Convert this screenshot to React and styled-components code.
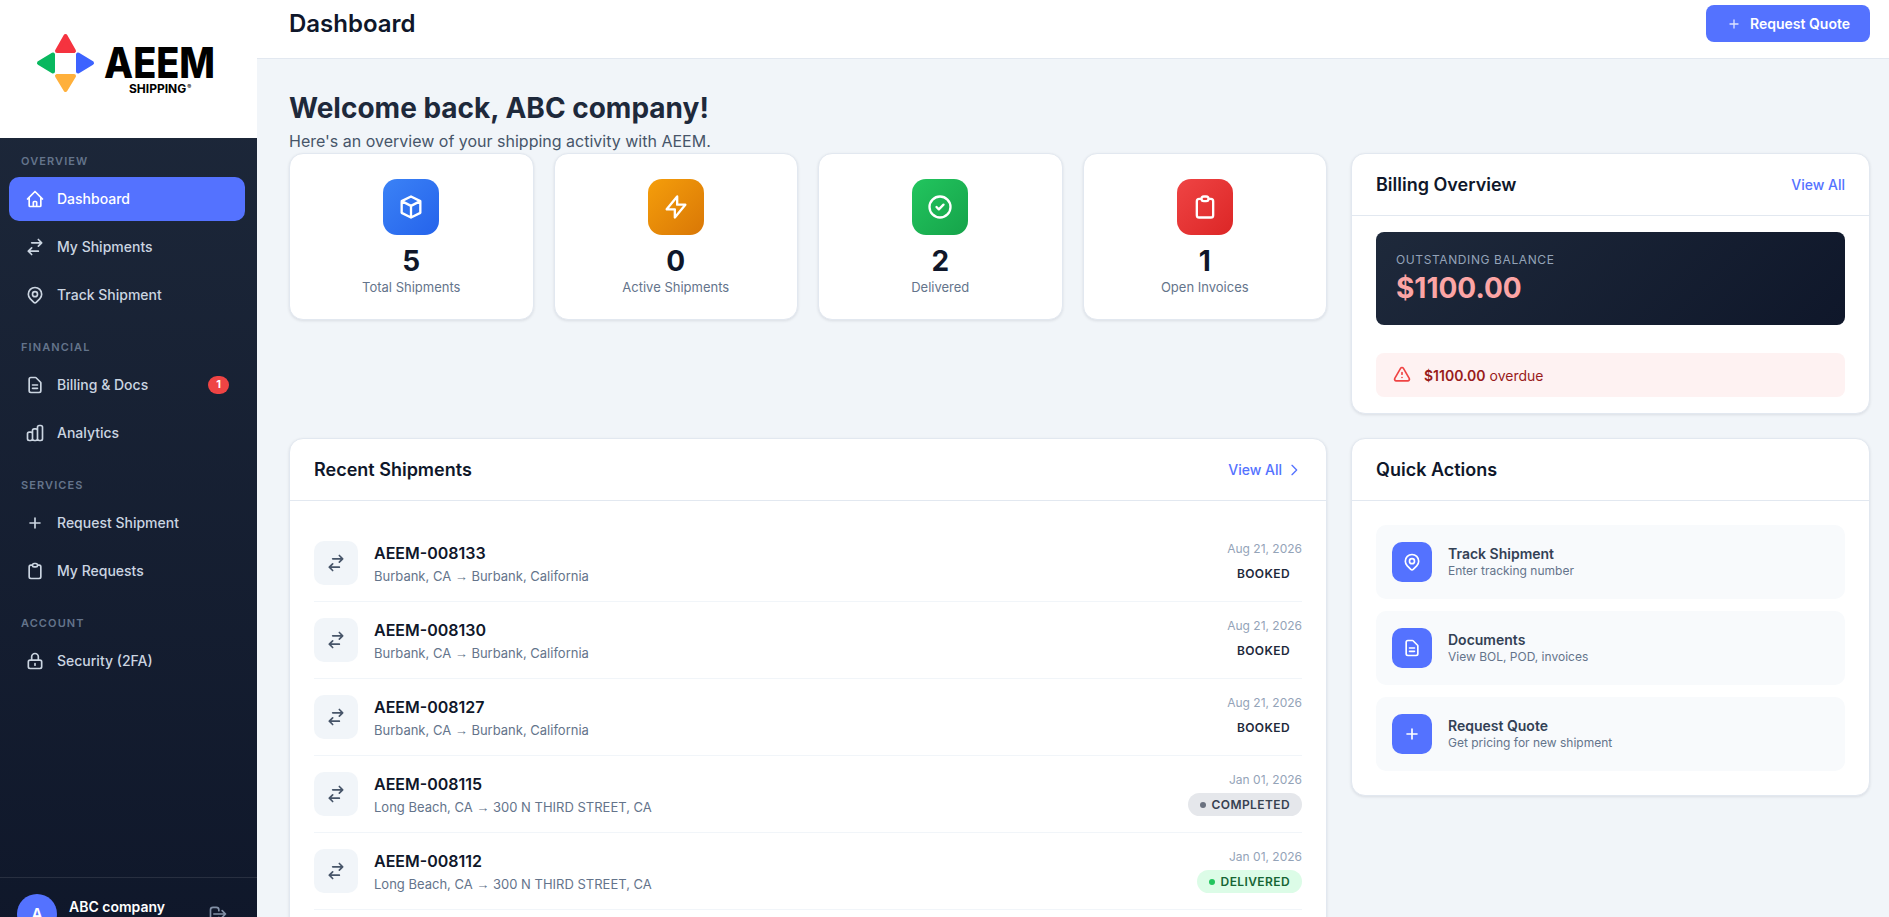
import styled, { createGlobalStyle } from "styled-components"
import {
    HiOutlineHome,
    HiOutlineSwitchHorizontal,
    HiOutlineLocationMarker,
    HiOutlineDocumentText,
    HiOutlineChartBar,
    HiOutlineClipboard,
    HiOutlineLockClosed,
    HiOutlineLogout,
    HiOutlineCube,
    HiOutlineLightningBolt,
    HiOutlineCheckCircle,
    HiOutlineExclamation,
    HiOutlineChevronRight,
} from "react-icons/hi"

const accent = "#5472ff"

const GlobalStyle = createGlobalStyle`
    * { box-sizing: border-box; }
    html, body {
        margin: 0;
        height: 100%;
        overflow: hidden;
        background: #f1f5f9;
        font-family: Inter, "Liberation Sans", sans-serif;
        font-size: 14px;
        line-height: 1.5;
    }
`

const Shell = styled.div`
    display: flex;
    width: 1889px;
    min-height: 950px;
`

const Sidebar = styled.aside`
    width: 257px;
    flex-shrink: 0;
    display: flex;
    flex-direction: column;
    background: linear-gradient(180deg, #1e293b 0%, #0f172a 100%);
`

const LogoBox = styled.div`
    height: 138px;
    background: #fff;
    display: flex;
    align-items: flex-start;
    svg { display: block; }
`

const Nav = styled.nav`
    flex: 1;
    padding: 15px 12px 0 9px;
    display: flex;
    flex-direction: column;
    gap: 22.5px;
`

const Section = styled.div`
    display: flex;
    flex-direction: column;
    gap: 4px;
`

const SectionLabel = styled.div`
    padding-left: 12px;
    margin-bottom: 3px;
    font-size: 11px;
    line-height: 16.5px;
    font-weight: 600;
    letter-spacing: 1.1px;
    text-transform: uppercase;
    color: #64748b;
`

const NavItem = styled.a`
    height: 44px;
    display: flex;
    align-items: center;
    gap: 12px;
    padding: 0 16px;
    border-radius: 10px;
    font-size: 14px;
    font-weight: 500;
    color: ${({ $active }) => ($active ? "#fff" : "#cbd5e1")};
    background: ${({ $active }) => ($active ? accent : "transparent")};
    svg { font-size: 20px; flex-shrink: 0; }
`

const NavBadge = styled.span`
    margin-left: auto;
    width: 21px;
    height: 18px;
    border-radius: 9px;
    background: #ef4444;
    color: #fff;
    font-size: 11px;
    font-weight: 700;
    display: flex;
    align-items: center;
    justify-content: center;
`

const SideFooter = styled.div`
    border-top: 1px solid rgba(255, 255, 255, 0.1);
    padding: 16px 29px 16px 17px;
    display: flex;
    align-items: center;
    gap: 12px;
`

const Avatar = styled.div`
    width: 40px;
    height: 40px;
    border-radius: 50%;
    background: ${accent};
    color: #fff;
    font-size: 16px;
    font-weight: 600;
    display: flex;
    align-items: center;
    justify-content: center;
    flex-shrink: 0;
`

const UserName = styled.div`
    flex: 1;
    align-self: flex-start;
    padding-top: 2px;
    color: #fff;
    font-size: 14px;
    font-weight: 600;
`

const LogoutIcon = styled(HiOutlineLogout)`
    font-size: 20px;
    color: #8391a7;
`

const Content = styled.div`
    flex: 1;
    min-width: 0;
    display: flex;
    flex-direction: column;
`

const Topbar = styled.header`
    height: 59px;
    background: #fff;
    border-bottom: 1px solid #e2e8f0;
    padding: 0 19px 11px 32px;
    display: flex;
    align-items: center;
    justify-content: space-between;
`

const PageTitle = styled.h1`
    margin: 0;
    font-size: 24px;
    line-height: 1.3;
    font-weight: 600;
    color: #0f172a;
`

const QuoteButton = styled.button`
    height: 37px;
    padding: 0 20px;
    border: 0;
    border-radius: 8px;
    background: ${accent};
    color: #fff;
    font-family: inherit;
    font-size: 14px;
    font-weight: 600;
    display: flex;
    align-items: center;
    gap: 8px;
    svg { width: 16px; height: 16px; opacity: 0.8; }
`

const Main = styled.main`
    padding: 32px 19px 0 32px;
`

const Welcome = styled.h2`
    margin: 0;
    font-size: 28px;
    line-height: 34px;
    font-weight: 700;
    color: #1e293b;
`

const Subtitle = styled.p`
    margin: 5px 0 0;
    font-size: 16px;
    line-height: 23px;
    color: #475569;
`

const Grid = styled.div`
    display: grid;
    grid-template-columns: 2fr 1fr;
    column-gap: 24px;
    row-gap: 24px;
    align-items: start;
`

const Stats = styled.div`
    display: grid;
    grid-template-columns: repeat(4, 1fr);
    gap: 20px;
`

const Card = styled.section`
    background: #fff;
    border: 1px solid #e2e8f0;
    border-radius: 14px;
    box-shadow: 0 1px 3px rgba(15, 23, 42, 0.1);
`

const StatCard = styled(Card)`
    padding: 25px 16px 21px;
    display: flex;
    flex-direction: column;
    align-items: center;
`

const StatIcon = styled.div`
    width: 56px;
    height: 56px;
    border-radius: 14px;
    color: #fff;
    background: linear-gradient(135deg, ${({ $from }) => $from}, ${({ $to }) => $to});
    display: flex;
    align-items: center;
    justify-content: center;
    svg { font-size: 28px; }
`

const StatValue = styled.div`
    margin-top: 9px;
    font-size: 28px;
    line-height: 34px;
    font-weight: 700;
    color: #0f172a;
`

const StatLabel = styled.div`
    font-size: 13px;
    line-height: 19.5px;
    color: #64748b;
`

const CardHeader = styled.div`
    height: 62px;
    padding: 0 24px;
    border-bottom: 1px solid #e2e8f0;
    display: flex;
    align-items: center;
    justify-content: space-between;
`

const CardTitle = styled.h3`
    margin: 0;
    font-size: 18px;
    font-weight: 600;
    color: #0f172a;
`

const ViewAll = styled.a`
    font-size: 14px;
    font-weight: 500;
    color: ${accent};
    display: flex;
    align-items: center;
    gap: 4px;
    svg { font-size: 16px; }
`

const BillingBody = styled.div`
    padding: 16px 24px;
    display: flex;
    flex-direction: column;
    gap: 28px;
`

const Balance = styled.div`
    height: 93px;
    padding: 19px 20px;
    border-radius: 8px;
    background: linear-gradient(135deg, #1e293b, #0f172a);
`

const BalanceLabel = styled.div`
    font-size: 12px;
    line-height: 18px;
    letter-spacing: 0.6px;
    color: #94a3b8;
`

const BalanceAmount = styled.div`
    margin-top: 2px;
    font-size: 28px;
    line-height: 34px;
    font-weight: 700;
    color: #fca5a5;
`

const Alert = styled.div`
    height: 44px;
    padding: 0 16px;
    border-radius: 8px;
    background: #fef2f2;
    color: #991b1b;
    display: flex;
    align-items: center;
    gap: 12px;
    font-size: 14px;
    strong { font-weight: 600; }
    svg { font-size: 20px; color: #ef4444; }
`

const ListBody = styled.div`
    padding: 24px;
`

const Row = styled.div`
    display: flex;
    align-items: center;
    gap: 16px;
    height: 77px;
    border-bottom: 1px solid #f1f5f9;
`

const RowIcon = styled.div`
    width: 44px;
    height: 44px;
    flex-shrink: 0;
    border-radius: 10px;
    background: #f1f5f9;
    color: #475569;
    display: flex;
    align-items: center;
    justify-content: center;
    svg { font-size: 20px; }
`

const RowText = styled.div`
    flex: 1;
    min-width: 0;
`

const RowTitle = styled.div`
    font-size: 16px;
    line-height: 24px;
    font-weight: 600;
    color: #0f172a;
`

const RowSub = styled.div`
    margin-top: 2px;
    font-size: 13px;
    line-height: 18px;
    color: #64748b;
`

const RouteArrow = styled.span`
    font-family: "Liberation Sans", sans-serif;
    font-size: 13px;
    line-height: 0;
`

const RowMeta = styled.div`
    display: flex;
    flex-direction: column;
    align-items: flex-end;
    gap: 6px;
`

const RowDate = styled.div`
    font-size: 12px;
    line-height: 15px;
    color: #94a3b8;
`

const Badge = styled.span`
    height: 23px;
    padding: 0 12px;
    border-radius: 12px;
    font-size: 12px;
    font-weight: 600;
    letter-spacing: 0.4px;
    display: flex;
    align-items: center;
    gap: 6px;
    color: ${({ $color }) => $color};
    background: ${({ $bg }) => $bg};
`

const Dot = styled.i`
    width: 6px;
    height: 6px;
    border-radius: 50%;
    background: ${({ $color }) => $color};
`

const Actions = styled.div`
    padding: 24px;
    display: flex;
    flex-direction: column;
    gap: 12px;
`

const Action = styled.a`
    height: 74px;
    padding: 0 16px;
    border-radius: 10px;
    background: #f8fafc;
    display: flex;
    align-items: center;
    gap: 16px;
`

const ActionIcon = styled.div`
    width: 40px;
    height: 40px;
    flex-shrink: 0;
    border-radius: 10px;
    background: ${accent};
    color: #fff;
    display: flex;
    align-items: center;
    justify-content: center;
    svg { width: 20px; height: 20px; }
`

const ActionTitle = styled.div`
    font-size: 14px;
    line-height: 18px;
    font-weight: 600;
    color: #334155;
`

const ActionSub = styled.div`
    font-size: 12px;
    line-height: 16px;
    color: #64748b;
`

const PlusIcon = () => (
    <svg width="1em" height="1em" viewBox="0 0 24 24" fill="none" stroke="currentColor" strokeWidth="2" strokeLinecap="round" strokeLinejoin="round">
        <path d="M12 6v6m0 0v6m0-6h6m-6 0H6" />
    </svg>
)

const Logo = () => (
    <svg width="230" height="120" viewBox="0 0 230 120">
        <g strokeWidth="4" strokeLinejoin="round">
            <path d="M65.5 36 74 51 57 51Z" fill="#f5333f" stroke="#f5333f" />
            <path d="M39 63 53 54.5 53 71.5Z" fill="#09b85f" stroke="#09b85f" />
            <path d="M92 63 78 54.5 78 71.5Z" fill="#3d63ff" stroke="#3d63ff" />
            <path d="M65.5 90 57 76 74 76Z" fill="#ffb03b" stroke="#ffb03b" />
        </g>
        <text
            x="104"
            y="77.5"
            textLength="111"
            lengthAdjust="spacingAndGlyphs"
            fontFamily="Inter, sans-serif"
            fontSize="42"
            fontWeight="800"
            fill="#000"
        >
            AEEM
        </text>
        <text x="129" y="92.5" fontFamily="Inter, sans-serif" fontSize="12" fontWeight="700" fill="#000">
            SHIPPING
            <tspan fontSize="6" dx="1" dy="-4">®</tspan>
        </text>
    </svg>
)

const stats = [
    { value: "5", label: "Total Shipments", icon: <HiOutlineCube />, from: "#3b82f6", to: "#2563eb" },
    { value: "0", label: "Active Shipments", icon: <HiOutlineLightningBolt />, from: "#f59e0b", to: "#d97706" },
    { value: "2", label: "Delivered", icon: <HiOutlineCheckCircle />, from: "#22c55e", to: "#16a34a" },
    { value: "1", label: "Open Invoices", icon: <HiOutlineClipboard />, from: "#ef4444", to: "#dc2626" },
]

const booked = { label: "BOOKED", color: "#1e293b", bg: "transparent" }
const completed = { label: "COMPLETED", color: "#374151", bg: "#e5e7eb", dot: "#6b7280" }
const delivered = { label: "DELIVERED", color: "#166534", bg: "#dcfce7", dot: "#22c55e" }

const shipments = [
    { id: "AEEM-008133", from: "Burbank, CA", to: "Burbank, California", date: "Aug 21, 2026", status: booked },
    { id: "AEEM-008130", from: "Burbank, CA", to: "Burbank, California", date: "Aug 21, 2026", status: booked },
    { id: "AEEM-008127", from: "Burbank, CA", to: "Burbank, California", date: "Aug 21, 2026", status: booked },
    { id: "AEEM-008115", from: "Long Beach, CA", to: "300 N THIRD STREET, CA", date: "Jan 01, 2026", status: completed },
    { id: "AEEM-008112", from: "Long Beach, CA", to: "300 N THIRD STREET, CA", date: "Jan 01, 2026", status: delivered },
]

const App = () => {
    return (
        <Shell>
            <GlobalStyle />
            <Sidebar>
                <LogoBox>
                    <Logo />
                </LogoBox>
                <Nav>
                    <Section>
                        <SectionLabel>Overview</SectionLabel>
                        <NavItem $active><HiOutlineHome />Dashboard</NavItem>
                        <NavItem><HiOutlineSwitchHorizontal />My Shipments</NavItem>
                        <NavItem><HiOutlineLocationMarker />Track Shipment</NavItem>
                    </Section>
                    <Section>
                        <SectionLabel>Financial</SectionLabel>
                        <NavItem>
                            <HiOutlineDocumentText />Billing &amp; Docs
                            <NavBadge>1</NavBadge>
                        </NavItem>
                        <NavItem><HiOutlineChartBar />Analytics</NavItem>
                    </Section>
                    <Section>
                        <SectionLabel>Services</SectionLabel>
                        <NavItem><PlusIcon />Request Shipment</NavItem>
                        <NavItem><HiOutlineClipboard />My Requests</NavItem>
                    </Section>
                    <Section>
                        <SectionLabel>Account</SectionLabel>
                        <NavItem><HiOutlineLockClosed />Security (2FA)</NavItem>
                    </Section>
                </Nav>
                <SideFooter>
                    <Avatar>A</Avatar>
                    <UserName>ABC company</UserName>
                    <LogoutIcon />
                </SideFooter>
            </Sidebar>
            <Content>
                <Topbar>
                    <PageTitle>Dashboard</PageTitle>
                    <QuoteButton><PlusIcon />Request Quote</QuoteButton>
                </Topbar>
                <Main>
                    <Welcome>Welcome back, ABC company!</Welcome>
                    <Subtitle>Here's an overview of your shipping activity with AEEM.</Subtitle>
                    <Grid>
                        <Stats>
                            {stats.map((s) => (
                                <StatCard key={s.label}>
                                    <StatIcon $from={s.from} $to={s.to}>{s.icon}</StatIcon>
                                    <StatValue>{s.value}</StatValue>
                                    <StatLabel>{s.label}</StatLabel>
                                </StatCard>
                            ))}
                        </Stats>
                        <Card>
                            <CardHeader>
                                <CardTitle>Billing Overview</CardTitle>
                                <ViewAll>View All</ViewAll>
                            </CardHeader>
                            <BillingBody>
                                <Balance>
                                    <BalanceLabel>OUTSTANDING BALANCE</BalanceLabel>
                                    <BalanceAmount>$1100.00</BalanceAmount>
                                </Balance>
                                <Alert>
                                    <HiOutlineExclamation />
                                    <span><strong>$1100.00</strong> overdue</span>
                                </Alert>
                            </BillingBody>
                        </Card>
                        <Card>
                            <CardHeader>
                                <CardTitle>Recent Shipments</CardTitle>
                                <ViewAll>View All <HiOutlineChevronRight /></ViewAll>
                            </CardHeader>
                            <ListBody>
                                {shipments.map((s) => (
                                    <Row key={s.id}>
                                        <RowIcon><HiOutlineSwitchHorizontal /></RowIcon>
                                        <RowText>
                                            <RowTitle>{s.id}</RowTitle>
                                            <RowSub>{s.from} <RouteArrow>→</RouteArrow> {s.to}</RowSub>
                                        </RowText>
                                        <RowMeta>
                                            <RowDate>{s.date}</RowDate>
                                            <Badge $color={s.status.color} $bg={s.status.bg}>
                                                {s.status.dot && <Dot $color={s.status.dot} />}
                                                {s.status.label}
                                            </Badge>
                                        </RowMeta>
                                    </Row>
                                ))}
                            </ListBody>
                        </Card>
                        <Card>
                            <CardHeader>
                                <CardTitle>Quick Actions</CardTitle>
                            </CardHeader>
                            <Actions>
                                <Action>
                                    <ActionIcon><HiOutlineLocationMarker /></ActionIcon>
                                    <div>
                                        <ActionTitle>Track Shipment</ActionTitle>
                                        <ActionSub>Enter tracking number</ActionSub>
                                    </div>
                                </Action>
                                <Action>
                                    <ActionIcon><HiOutlineDocumentText /></ActionIcon>
                                    <div>
                                        <ActionTitle>Documents</ActionTitle>
                                        <ActionSub>View BOL, POD, invoices</ActionSub>
                                    </div>
                                </Action>
                                <Action>
                                    <ActionIcon><PlusIcon /></ActionIcon>
                                    <div>
                                        <ActionTitle>Request Quote</ActionTitle>
                                        <ActionSub>Get pricing for new shipment</ActionSub>
                                    </div>
                                </Action>
                            </Actions>
                        </Card>
                    </Grid>
                </Main>
            </Content>
        </Shell>
    )
}

export default App
